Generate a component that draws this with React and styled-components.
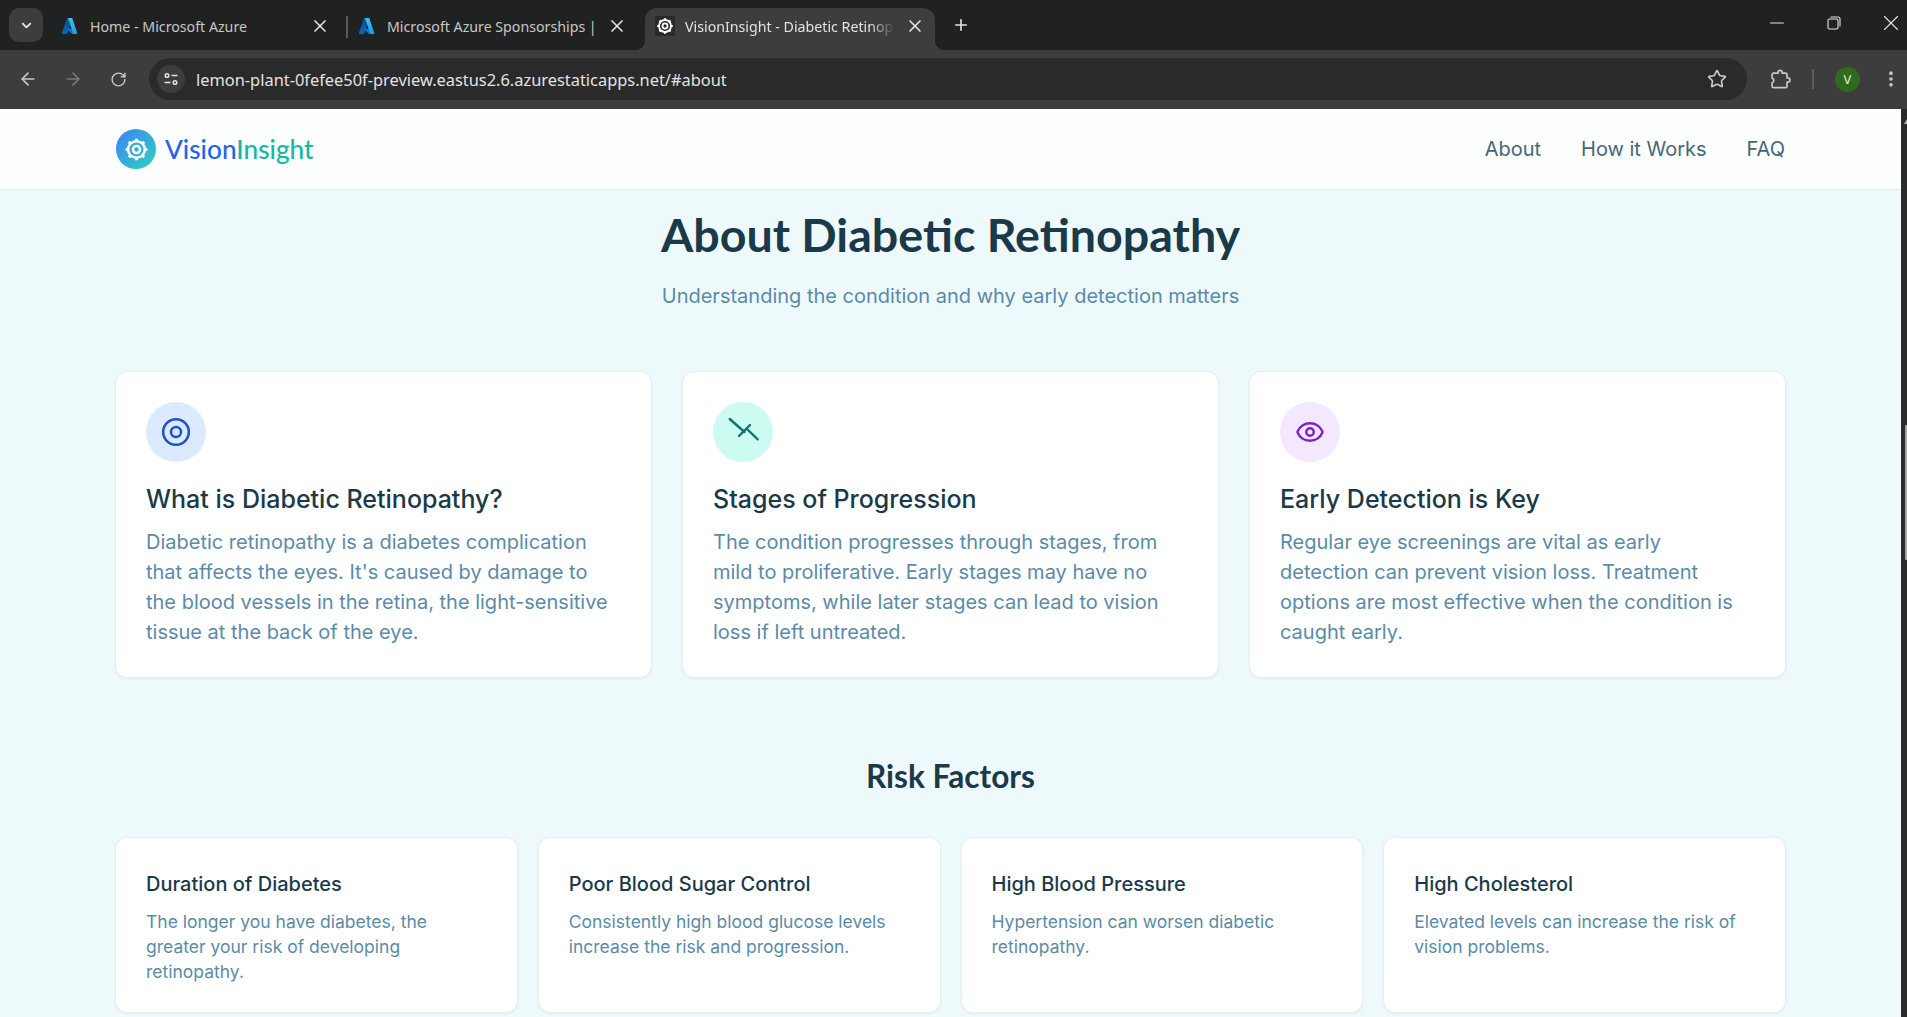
import React from 'react';
import styled, { createGlobalStyle } from 'styled-components';
import { ArrowLeft, ArrowRight, RotateCw, Star, EllipsisVertical, ChevronDown, X, Plus, Minus, Eye } from 'lucide-react';

const GlobalStyle = createGlobalStyle`
  html, body { margin: 0; padding: 0; height: 100%; overflow: hidden; }
  body { font-family: Inter, "Liberation Sans", sans-serif; background: #202221; }
  * { box-sizing: border-box; }
`;

const AzureIcon = ({ size = 18 }) => (
  <svg width={size} height={size} viewBox="0 0 18 18">
    <defs>
      <linearGradient id="azA" x1="0" y1="0" x2="0" y2="1">
        <stop offset="0" stopColor="#114a8b" />
        <stop offset="1" stopColor="#0669bc" />
      </linearGradient>
      <linearGradient id="azB" x1="0" y1="0" x2="1" y2="1">
        <stop offset="0" stopColor="#3ccbf4" />
        <stop offset="1" stopColor="#2892df" />
      </linearGradient>
    </defs>
    <path d="M6.4.9h5L6.2 16.5c-.1.3-.4.5-.7.5H1.6c-.5 0-.9-.5-.7-1L5.7 1.4c.1-.3.4-.5.7-.5z" fill="url(#azA)" />
    <path d="M13.7 11.6H5.8c-.2 0-.3.2-.1.4l5.1 4.7c.1.1.3.2.5.2h4.5z" fill="#0078d4" />
    <path d="M11.4 1.4c-.1-.3-.4-.5-.7-.5H6.5c.3 0 .6.2.7.5l4.8 14.6c.2.5-.2 1-.7 1h4.3c.5 0 .9-.5.7-1z" fill="url(#azB)" />
  </svg>
);

const GearIcon = ({ size = 24, color = '#fff' }) => (
  <svg width={size} height={size} viewBox="0 0 24 24" fill="none" stroke={color} strokeWidth="2.4">
    <circle cx="12" cy="12" r="8" />
    <circle cx="12" cy="12" r="3.4" />
    <path strokeWidth="2.8" d="M12 1.6v3M12 19.4v3M1.6 12h3M19.4 12h3M4.6 4.6l2.1 2.1M17.3 17.3l2.1 2.1M4.6 19.4l2.1-2.1M17.3 6.7l2.1-2.1" />
  </svg>
);

const RingsIcon = () => (
  <svg width="30" height="30" viewBox="0 0 30 30" fill="none" stroke="#1d4ed8" strokeWidth="2.5">
    <circle cx="15" cy="15" r="12.8" />
    <circle cx="15" cy="15" r="5" />
  </svg>
);

const TrendIcon = () => (
  <svg width="40" height="40" viewBox="0 0 40 40" fill="none" stroke="#0f766e" strokeWidth="2.4" strokeLinecap="round">
    <path d="M6.7 7L21.5 20M16 24L27 13M24 17L34.7 27.3" />
  </svg>
);

const PuzzleIcon = () => (
  <svg width="20" height="20" viewBox="0 0 20 20" fill="none" stroke="#c7c7c7" strokeWidth="1.7" strokeLinejoin="round">
    <path d="M2.5 4.2H7V3.4a2.1 2.1 0 0 1 4.2 0v.8h3.4a1.4 1.4 0 0 1 1.4 1.4v3.2h.8a2.1 2.1 0 0 1 0 4.2H16v4.2a1.4 1.4 0 0 1-1.4 1.4H2.5a1.4 1.4 0 0 1-1.4-1.4v-3.5a2.4 2.4 0 0 0 0-4.6V5.6a1.4 1.4 0 0 1 1.4-1.4z" />
  </svg>
);

const RestoreIcon = () => (
  <svg width="14" height="14" viewBox="0 0 14 14" fill="none" stroke="#e3e3e3" strokeWidth="1.1">
    <rect x="1" y="3" width="10" height="10" rx="1.5" />
    <path d="M3.5 1h7.5a2 2 0 0 1 2 2v7.5" />
  </svg>
);

const tabs = [
  { title: 'Home - Microsoft Azure', icon: 'azure' },
  { title: 'Microsoft Azure Sponsorships |', icon: 'azure', divider: true },
  { title: 'VisionInsight - Diabetic Retinop', icon: 'gear', active: true },
];

const infoCards = [
  {
    title: 'What is Diabetic Retinopathy?',
    text: "Diabetic retinopathy is a diabetes complication that affects the eyes. It's caused by damage to the blood vessels in the retina, the light-sensitive tissue at the back of the eye.",
    bg: '#dbeafe',
    icon: <RingsIcon />,
  },
  {
    title: 'Stages of Progression',
    text: 'The condition progresses through stages, from mild to proliferative. Early stages may have no symptoms, while later stages can lead to vision loss if left untreated.',
    bg: '#ccfbf1',
    icon: <TrendIcon />,
  },
  {
    title: 'Early Detection is Key',
    text: 'Regular eye screenings are vital as early detection can prevent vision loss. Treatment options are most effective when the condition is caught early.',
    bg: '#f3e8ff',
    icon: <Eye size={30} color="#7e22ce" strokeWidth={2} />,
  },
];

const risks = [
  { title: 'Duration of Diabetes', text: 'The longer you have diabetes, the greater your risk of developing retinopathy.' },
  { title: 'Poor Blood Sugar Control', text: 'Consistently high blood glucose levels increase the risk and progression.' },
  { title: 'High Blood Pressure', text: 'Hypertension can worsen diabetic retinopathy.' },
  { title: 'High Cholesterol', text: 'Elevated levels can increase the risk of vision problems.' },
];

const App = () => {
  return (
    <Screen>
      <GlobalStyle />
      <TabStrip>
        <TabSearch><ChevronDown size={15} color="#e3e3e3" strokeWidth={3} /></TabSearch>
        {tabs.map((tab) => (
          <Tab key={tab.title} $active={tab.active}>
            {tab.divider && <TabDivider />}
            <Favicon $gear={tab.icon === 'gear'}>
              {tab.icon === 'azure' ? <AzureIcon /> : <GearIcon size={18} />}
            </Favicon>
            <TabTitle $active={tab.active}>{tab.title}</TabTitle>
            <X size={20} color="#e3e3e3" strokeWidth={2} />
          </Tab>
        ))}
        <NewTab><Plus size={18} color="#e3e3e3" strokeWidth={2.2} /></NewTab>
        <WindowButtons>
          <WindowButton><Minus size={22} color="#e3e3e3" strokeWidth={1.1} /></WindowButton>
          <WindowButton><RestoreIcon /></WindowButton>
          <WindowButton><X size={26} color="#e3e3e3" strokeWidth={1} /></WindowButton>
        </WindowButtons>
      </TabStrip>

      <Toolbar>
        <ToolButton><ArrowLeft size={20} color="#c7c7c7" /></ToolButton>
        <ToolButton><ArrowRight size={20} color="#747775" /></ToolButton>
        <ToolButton><RotateCw size={17} color="#c7c7c7" /></ToolButton>
        <Omnibox>
          <SiteInfo>
            <svg width="16" height="16" viewBox="0 0 16 16" fill="none" stroke="#e3e3e3" strokeWidth="1.5">
              <circle cx="4" cy="4.5" r="1.8" />
              <path d="M8.5 4.5h6M1.5 11.5h6" />
              <circle cx="12" cy="11.5" r="1.8" />
            </svg>
          </SiteInfo>
          <Url>lemon-plant-0fefee50f-preview.eastus2.6.azurestaticapps.net/#about</Url>
          <Star size={20} color="#c7c7c7" strokeWidth={2} />
        </Omnibox>
        <ToolIcons>
          <PuzzleIcon />
          <ToolDivider />
          <Avatar>V</Avatar>
          <EllipsisVertical size={20} color="#c7c7c7" strokeWidth={2.4} />
        </ToolIcons>
      </Toolbar>

      <Viewport>
        <Page>
          <Nav>
            <Logo>
              <LogoBadge><GearIcon size={25} /></LogoBadge>
              <LogoText>Vision<span>Insight</span></LogoText>
            </Logo>
            <NavLinks>
              <NavLink>About</NavLink>
              <NavLink>How it Works</NavLink>
              <NavLink>FAQ</NavLink>
            </NavLinks>
          </Nav>
          <Content>
            <Title>About Diabetic Retinopathy</Title>
            <Subtitle>Understanding the condition and why early detection matters</Subtitle>
            <InfoGrid>
              {infoCards.map((card) => (
                <InfoCard key={card.title}>
                  <IconCircle $bg={card.bg}>{card.icon}</IconCircle>
                  <InfoTitle>{card.title}</InfoTitle>
                  <InfoText>{card.text}</InfoText>
                </InfoCard>
              ))}
            </InfoGrid>
            <SectionTitle>Risk Factors</SectionTitle>
            <RiskGrid>
              {risks.map((risk) => (
                <RiskCard key={risk.title}>
                  <RiskTitle>{risk.title}</RiskTitle>
                  <RiskText>{risk.text}</RiskText>
                </RiskCard>
              ))}
            </RiskGrid>
          </Content>
        </Page>
        <Scrollbar>
          <ScrollArrow />
          <ScrollThumb />
        </Scrollbar>
      </Viewport>
    </Screen>
  );
};

const Screen = styled.div`
  height: 100vh;
  display: flex;
  flex-direction: column;
  overflow: hidden;
`;

const TabStrip = styled.div`
  height: 50px;
  flex: none;
  display: flex;
  align-items: flex-end;
  padding-left: 9px;
  background: #202221;
`;

const TabSearch = styled.div`
  width: 34px;
  height: 34px;
  margin: 0 6px 8px 0;
  border-radius: 10px;
  background: #3c3d3d;
  display: flex;
  align-items: center;
  justify-content: center;
`;

const Tab = styled.div`
  position: relative;
  width: ${(p) => (p.$active ? '290px' : '297px')};
  height: 42px;
  margin-left: ${(p) => (p.$active ? '2px' : '0')};
  padding: 0 ${(p) => (p.$active ? '10px' : '16px')} 6px ${(p) => (p.$active ? '10px' : '11px')};
  display: flex;
  align-items: center;
  gap: 10px;
  border-radius: 12px 12px 0 0;
  background: ${(p) => (p.$active ? '#3c3d3d' : 'transparent')};
  color: ${(p) => (p.$active ? '#e3e3e3' : '#c7c7c7')};

  ${(p) => p.$active && `
    &::before, &::after {
      content: '';
      position: absolute;
      bottom: 0;
      width: 10px;
      height: 10px;
    }
    &::before {
      left: -10px;
      background: radial-gradient(circle at 0 0, transparent 10px, #3c3d3d 10.5px);
    }
    &::after {
      right: -10px;
      background: radial-gradient(circle at 100% 0, transparent 10px, #3c3d3d 10.5px);
    }
  `}
`;

const TabDivider = styled.span`
  position: absolute;
  left: 0;
  top: 8px;
  width: 1.5px;
  height: 22px;
  background: #5a5b5b;
`;

const Favicon = styled.span`
  width: 20px;
  height: 20px;
  flex: none;
  display: flex;
  align-items: center;
  justify-content: center;
  background: ${(p) => (p.$gear ? '#2a2a2a' : 'transparent')};
`;

const TabTitle = styled.span`
  flex: 1;
  min-width: 0;
  white-space: nowrap;
  font-family: "Noto Sans", sans-serif;
  font-size: 14.2px;
  ${(p) => p.$active && `
    mask-image: linear-gradient(to right, #000 88%, transparent 100%);
  `}
`;

const NewTab = styled.div`
  width: 40px;
  height: 36px;
  margin: 0 0 7px 6px;
  display: flex;
  align-items: center;
  justify-content: center;
`;

const WindowButtons = styled.div`
  margin: 0 3px 0 auto;
  height: 100%;
  padding-bottom: 4px;
  display: flex;
  align-items: center;
  gap: 31px;
`;

const WindowButton = styled.div`
  width: 26px;
  height: 26px;
  display: flex;
  align-items: center;
  justify-content: center;
`;

const Toolbar = styled.div`
  height: 59px;
  flex: none;
  display: flex;
  align-items: center;
  gap: 9px;
  padding: 0 6px 1px 10px;
  background: #3c3d3d;
`;

const ToolButton = styled.div`
  width: 36px;
  height: 36px;
  display: flex;
  align-items: center;
  justify-content: center;
`;

const Omnibox = styled.div`
  flex: 1;
  height: 42px;
  margin-left: 4px;
  padding: 0 20px 0 8px;
  display: flex;
  align-items: center;
  border-radius: 21px;
  background: #2a2a2a;
`;

const SiteInfo = styled.div`
  width: 28px;
  height: 28px;
  margin-right: 11px;
  border-radius: 50%;
  background: #3c3d3d;
  display: flex;
  align-items: center;
  justify-content: center;
`;

const Url = styled.div`
  flex: 1;
  font-family: "Noto Sans", sans-serif;
  font-size: 16.4px;
  color: #e3e3e3;
`;

const ToolIcons = styled.div`
  padding-left: 15px;
  display: flex;
  align-items: center;
  gap: 21px;
`;

const ToolDivider = styled.span`
  width: 2px;
  height: 20px;
  background: #5a5b5b;
`;

const Avatar = styled.div`
  width: 25px;
  height: 25px;
  border-radius: 50%;
  background: #33691e;
  color: #e8f5e0;
  font-size: 12px;
  display: flex;
  align-items: center;
  justify-content: center;
`;

const Viewport = styled.div`
  flex: 1;
  min-height: 0;
  display: flex;
`;

const Page = styled.div`
  flex: 1;
  min-width: 0;
  background: #eef9fc;
`;

const Scrollbar = styled.div`
  position: relative;
  width: 6px;
  flex: none;
  background: #2b2b2b;
  padding: 316px 0 0 4px;
`;

const ScrollArrow = styled.span`
  position: absolute;
  top: 10px;
  right: 0;
  border-left: 3px solid transparent;
  border-bottom: 5px solid #b5b5b5;
`;

const ScrollThumb = styled.div`
  width: 2px;
  height: 135px;
  background: #a5a5a5;
  border-radius: 1px 0 0 1px;
`;

const Nav = styled.nav`
  height: 80px;
  padding: 0 116px;
  display: flex;
  align-items: center;
  justify-content: space-between;
  background: #fdfefe;
  box-shadow: 0 1px 2px rgba(0, 0, 0, 0.06);
`;

const Logo = styled.div`
  display: flex;
  align-items: center;
  gap: 9px;
`;

const LogoBadge = styled.div`
  width: 40px;
  height: 40px;
  border-radius: 50%;
  background: linear-gradient(135deg, #3b82f6, #2dd4bf);
  display: flex;
  align-items: center;
  justify-content: center;
`;

const LogoText = styled.div`
  font-family: Lato, "Noto Sans", sans-serif;
  font-size: 26.2px;
  font-weight: 500;
  color: #2563eb;

  span {
    color: #14b8a6;
  }
`;

const NavLinks = styled.div`
  display: flex;
  gap: 40px;
`;

const NavLink = styled.a`
  font-size: 20px;
  color: #46667a;
`;

const Content = styled.main`
  padding: 19px 115px 0;
`;

const Title = styled.h1`
  margin: 0;
  text-align: center;
  font-family: Lato, "Noto Sans", sans-serif;
  font-size: 46.6px;
  line-height: 52px;
  font-weight: 700;
  color: #1a3a4a;
`;

const Subtitle = styled.p`
  margin: 23px 0 0;
  text-align: center;
  font-size: 20px;
  line-height: 26px;
  color: #5a8ba8;
`;

const InfoGrid = styled.div`
  margin-top: 62px;
  display: grid;
  grid-template-columns: repeat(3, 1fr);
  gap: 30px;
`;

const InfoCard = styled.article`
  height: 307px;
  padding: 30px;
  background: #fff;
  border: 1px solid #e4eef2;
  border-radius: 12px;
  box-shadow: 0 1px 3px rgba(0, 0, 0, 0.05);
`;

const IconCircle = styled.div`
  width: 60px;
  height: 60px;
  border-radius: 50%;
  background: ${(p) => p.$bg};
  display: flex;
  align-items: center;
  justify-content: center;
`;

const InfoTitle = styled.h3`
  margin: 20px 0 11px;
  font-size: 25px;
  line-height: 34px;
  font-weight: 500;
  color: #1a3a4a;
`;

const InfoText = styled.p`
  margin: 0;
  font-size: 20px;
  line-height: 30px;
  color: #5a8ba8;
`;

const SectionTitle = styled.h2`
  margin: 79px 0 0;
  text-align: center;
  font-family: Lato, "Noto Sans", sans-serif;
  font-size: 31.6px;
  line-height: 38px;
  font-weight: 700;
  color: #1a3a4a;
`;

const RiskGrid = styled.div`
  margin-top: 42px;
  display: grid;
  grid-template-columns: repeat(4, 1fr);
  gap: 20px;
`;

const RiskCard = styled.article`
  height: 176px;
  padding: 32px 30px 30px;
  background: #fff;
  border: 1px solid #e4eef2;
  border-radius: 12px;
  box-shadow: 0 1px 3px rgba(0, 0, 0, 0.05);
`;

const RiskTitle = styled.h4`
  margin: 0 0 11px;
  font-size: 20px;
  line-height: 28px;
  font-weight: 500;
  color: #1a3a4a;
`;

const RiskText = styled.p`
  margin: 0;
  font-size: 17.5px;
  line-height: 25px;
  color: #5a8ba8;
`;

export default App;
